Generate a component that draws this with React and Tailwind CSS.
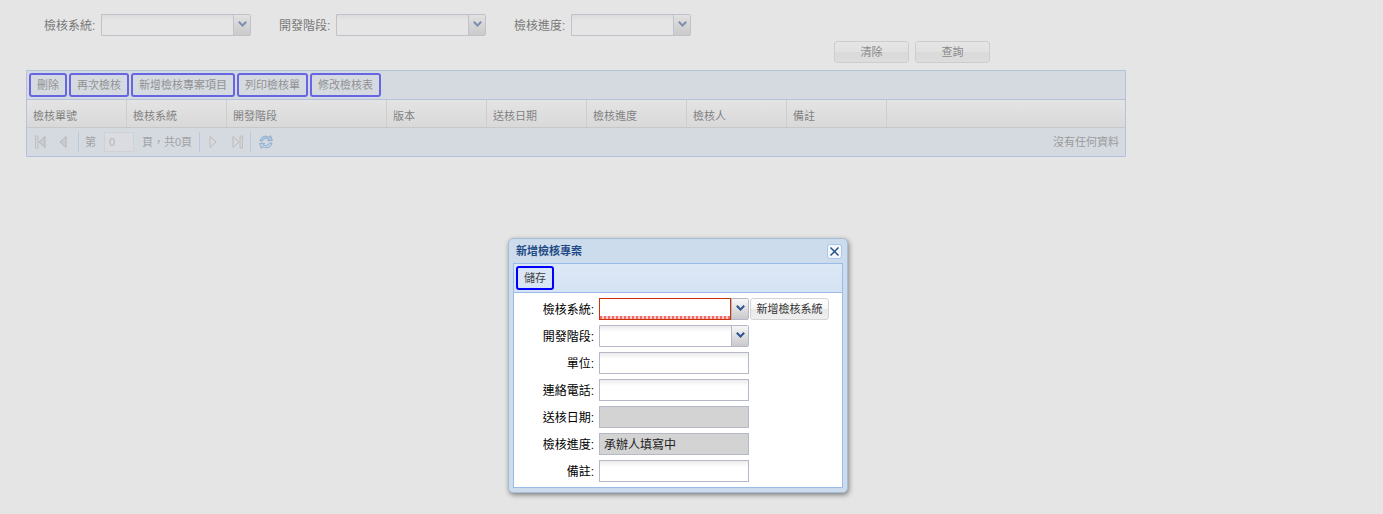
const FONT = "font-['Liberation_Sans','Noto_Sans_CJK_TC',sans-serif]";

const columns = [
	{ label: "檢核單號", w: "w-[100px]" },
	{ label: "檢核系統", w: "w-[100px]" },
	{ label: "開發階段", w: "w-[160px]" },
	{ label: "版本", w: "w-[100px]" },
	{ label: "送核日期", w: "w-[100px]" },
	{ label: "檢核進度", w: "w-[100px]" },
	{ label: "檢核人", w: "w-[100px]" },
	{ label: "備註", w: "w-[100px]" },
];

const gridActions = ["刪除", "再次檢核", "新增檢核專案項目", "列印檢核單", "修改檢核表"];

function Chevron() {
	return (
		<svg width="9" height="6" viewBox="0 0 9 6">
			<path d="M0.8 0.8 L4.5 4.5 L8.2 0.8" fill="none" stroke="#2f5493" strokeWidth="2" />
		</svg>
	);
}

function Trigger() {
	return (
		<div className="flex h-full w-[17px] shrink-0 items-start justify-center border-l border-[#b5b8c8] bg-gradient-to-b from-[#f7f7f7] to-[#c9c9cb] pt-[6px]">
			<Chevron />
		</div>
	);
}

function Combo({ width }) {
	return (
		<div className={`flex h-[22px] ${width} overflow-hidden rounded-r-[2px] border border-[#b5b8c8] bg-gradient-to-b from-[#ececec] via-white via-30% to-white`}>
			<div className="flex-1" />
			<Trigger />
		</div>
	);
}

function SearchField({ label, width }) {
	return (
		<div className="flex items-center gap-[4px]">
			<span className="w-[53px] whitespace-nowrap pt-[2px] text-xs leading-none text-[#222]">{label}:</span>
			<Combo width={width} />
		</div>
	);
}

function SearchButton({ children }) {
	return (
		<button
			type="button"
			className="h-[22px] w-[75px] rounded-[3px] border border-[#cfcfcf] bg-[linear-gradient(#ffffff_0,#f6f6f6_48%,#e8e8e8_48%,#ededed_100%)] pt-px text-[11px] text-[#444]"
		>
			{children}
		</button>
	);
}

function OutlinedButton({ children }) {
	return (
		<button
			type="button"
			className="h-[24px] rounded-[3px] border-2 border-[#0000ff] px-[6px] text-[11px] text-[#555]"
		>
			{children}
		</button>
	);
}

function PagerIcon({ kind }) {
	return (
		<svg width="11" height="14" viewBox="0 0 11 14" className="shrink-0">
			{kind === "first" && <rect x="0.5" y="1" width="2.5" height="12" fill="#dcdfe4" stroke="#a8a8a8" strokeWidth="0.8" />}
			{(kind === "first" || kind === "prev") && <path d="M10 1.5 V12.5 L4 7 Z" fill="#c9cdd3" stroke="#a0a0a0" />}
			{(kind === "next" || kind === "last") && <path d="M1 1.5 V12.5 L7 7 Z" fill="#e6e8ec" stroke="#a8a8a8" />}
			{kind === "last" && <rect x="8" y="1" width="2.5" height="12" fill="#dcdfe4" stroke="#a8a8a8" strokeWidth="0.8" />}
		</svg>
	);
}

function PagerRefresh() {
	return (
		<svg width="16" height="16" viewBox="0 0 16 16" className="ml-[7px] shrink-0">
			<path d="M2 7 C2.5 3.5 6 1.5 9.5 2.5 L11 3.5 L12.5 1.5 L14.5 6.5 L9.5 6.8 L10.8 5.2 C8 3.8 5.5 4.6 4.6 7 Z" fill="#8fc0ee" stroke="#3b7fc8" strokeWidth="0.8" />
			<path d="M14 9 C13.5 12.5 10 14.5 6.5 13.5 L5 12.5 L3.5 14.5 L1.5 9.5 L6.5 9.2 L5.2 10.8 C8 12.2 10.5 11.4 11.4 9 Z" fill="#b5d6f4" stroke="#3b7fc8" strokeWidth="0.8" />
		</svg>
	);
}

function PagerSep({ className = "" }) {
	return <div className={`h-[20px] w-px shrink-0 bg-[#a9c5ee] ${className}`} />;
}

function Grid() {
	return (
		<div className="mt-[7px] w-[1100px] border border-[#99bbe8]">
			<div className="flex h-[28px] items-center gap-[2px] bg-[#dfe8f6] pl-[2px]">
				{gridActions.map((label) => (
					<OutlinedButton key={label}>{label}</OutlinedButton>
				))}
			</div>
			<div className="flex h-[29px] border-y border-[#99bbe8] border-b-[#c0c4cc] bg-gradient-to-b from-[#fcfcfc] to-[#e6e6e8]">
				{columns.map((col) => (
					<div key={col.label} className={`${col.w} flex items-center border-r border-[#d0d0d0] pl-[6px] pt-[5px] text-[11px] text-[#333]`}>
						{col.label}
					</div>
				))}
			</div>
			<div className="flex h-[28px] items-center bg-[#dfe8f6] pl-[8px] pr-[6px] text-[11px] text-[#777]">
				<PagerIcon kind="first" />
				<div className="ml-[10px]" />
				<PagerIcon kind="prev" />
				<PagerSep className="ml-[11px]" />
				<span className="ml-[6px]">第</span>
				<div className="ml-[8px] flex h-[20px] w-[30px] items-center border border-[#d2d6dc] bg-[#e8edf6] pl-[4px] text-[#999]">0</div>
				<span className="ml-[8px]">頁，共0頁</span>
				<PagerSep className="ml-[7px]" />
				<div className="ml-[9px]" />
				<PagerIcon kind="next" />
				<div className="ml-[12px]" />
				<PagerIcon kind="last" />
				<PagerSep className="ml-[7px]" />
				<PagerRefresh />
				<span className="ml-auto text-[#666]">沒有任何資料</span>
			</div>
		</div>
	);
}

function FormRow({ label, children }) {
	return (
		<div className="flex items-center">
			<span className="w-[80px] pt-[2px] text-right text-xs leading-none text-black">{label}:</span>
			<div className="ml-[5px] flex items-center">{children}</div>
		</div>
	);
}

function TextField({ value = "", disabled = false }) {
	return (
		<div
			className={
				disabled
					? "flex h-[22px] w-[150px] items-center border border-[#b5b8c8] bg-[#d3d3d3] pl-[4px] pt-[2px] text-xs text-[#222]"
					: "h-[22px] w-[150px] border border-[#b5b8c8] bg-gradient-to-b from-[#ececec] via-white via-30% to-white"
			}
		>
			{value}
		</div>
	);
}

function DialogWindow() {
	return (
		<div className="absolute left-[508px] top-[238px] w-[340px] rounded-[5px] border border-[#a9bcd5] bg-[#cddcec] px-[4px] pb-[4px] shadow-[1px_2px_5px_rgba(0,0,0,0.45)]">
			<div className="flex h-[24px] items-center justify-between pl-[3px] pr-[1px]">
				<span className="text-[11px] font-bold text-[#1f4a85]">新增檢核專案</span>
				<div className="flex h-[15px] w-[15px] items-center justify-center rounded-[3px] border border-[#a9c5ee] bg-[#f4f8fd]">
					<svg width="11" height="11" viewBox="0 0 11 11">
						<path d="M1.5 1.5 L9.5 9.5 M9.5 1.5 L1.5 9.5" stroke="#27508f" strokeWidth="1.5" />
					</svg>
				</div>
			</div>
			<div className="border border-[#99bbe8] bg-white">
				<div className="flex h-[29px] items-center border-b border-[#99bbe8] bg-gradient-to-b from-[#dce8f6] to-[#d6e3f3] pl-[2px]">
					<button type="button" className="h-[24px] rounded-[3px] border-2 border-[#0000ff] px-[6px] text-[11px] text-[#444]">
						儲存
					</button>
				</div>
				<div className="flex flex-col gap-[5px] py-[5px]">
					<FormRow label="檢核系統">
						<div className="flex h-[22px] w-[150px] rounded-r-[2px] border border-[#b5b8c8] bg-white">
							<div className="relative -my-px -ml-px flex-1 border border-[#cc3300]">
								<div className="absolute inset-x-0 bottom-0 h-[3px] bg-[repeating-linear-gradient(90deg,#f46a6a_0_2px,#ffc8c8_2px_4px)]" />
							</div>
							<Trigger />
						</div>
						<button
							type="button"
							className="ml-px h-[22px] w-[79px] rounded-[3px] border border-[#d4d4d4] bg-[linear-gradient(#ffffff_0,#f6f6f6_48%,#e9e9e9_48%,#efefef_100%)] pt-px text-[11px] text-[#333]"
						>
							新增檢核系統
						</button>
					</FormRow>
					<FormRow label="開發階段">
						<Combo width="w-[150px]" />
					</FormRow>
					<FormRow label="單位">
						<TextField />
					</FormRow>
					<FormRow label="連絡電話">
						<TextField />
					</FormRow>
					<FormRow label="送核日期">
						<TextField disabled />
					</FormRow>
					<FormRow label="檢核進度">
						<TextField disabled value="承辦人填寫中" />
					</FormRow>
					<FormRow label="備註">
						<TextField />
					</FormRow>
				</div>
			</div>
		</div>
	);
}

export default function App() {
	return (
		<div className={`relative h-[514px] w-[1383px] overflow-hidden bg-white ${FONT}`}>
			<div className="pl-[26px] pt-[14px]">
				{/* 查詢條件 */}
				<div className="flex items-center gap-[28px] pl-[18px]">
					<SearchField label="檢核系統" width="w-[150px]" />
					<SearchField label="開發階段" width="w-[150px]" />
					<SearchField label="檢核進度" width="w-[120px]" />
				</div>
				<div className="mt-[5px] flex gap-[6px] pl-[808px]">
					<SearchButton>清除</SearchButton>
					<SearchButton>查詢</SearchButton>
				</div>
				<Grid />
			</div>

			{/* modal 遮罩 */}
			<div className="absolute inset-0 bg-[#cccccc]/50" />
			<DialogWindow />
		</div>
	);
}
